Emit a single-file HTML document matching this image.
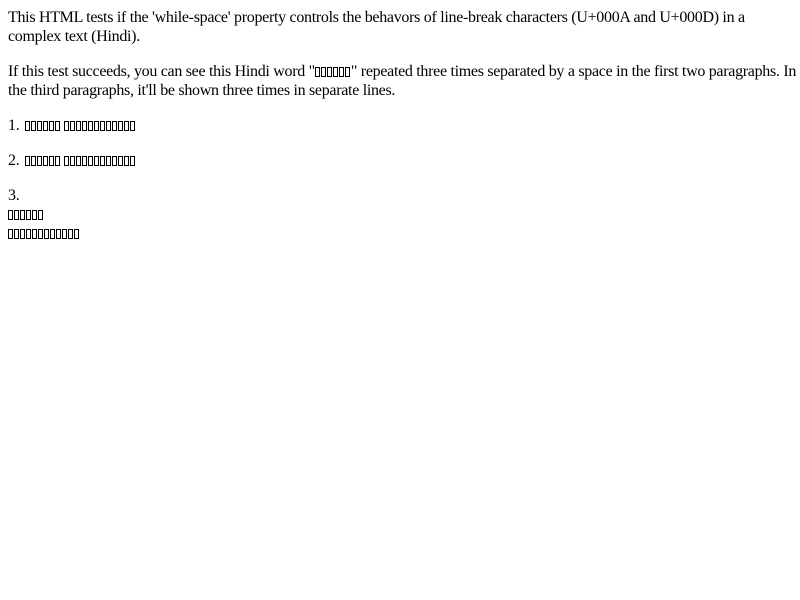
<!DOCTYPE html>
<html><head><meta charset="utf-8">
<style>
body{margin:8px;font-family:"Liberation Serif",serif;font-size:16px;color:#000;background:#fff;line-height:19px;letter-spacing:-0.3px}
p{margin:16px 0}
p:first-child{margin-top:0}
.b{display:inline-block;width:3px;height:8px;border:1px solid #000;margin-right:1px;vertical-align:-1px}
.w{display:inline-block;white-space:nowrap;letter-spacing:0}
.w2{margin-left:3px}
.n{margin-left:2px}
</style></head><body>
<p>This HTML tests if the 'while-space' property controls the behavors of line-break characters (U+000A and U+000D) in a complex text (Hindi).</p>
<p style="white-space:nowrap">If this test succeeds, you can see this Hindi word "<span class="w"><i class="b"></i><i class="b"></i><i class="b"></i><i class="b"></i><i class="b"></i><i class="b"></i></span>" repeated three times separated by a space in the first two paragraphs. In<br>the third paragraphs, it'll be shown three times in separate lines.</p>
<p>1. <span class="w n"><i class="b"></i><i class="b"></i><i class="b"></i><i class="b"></i><i class="b"></i><i class="b"></i></span><span class="w w2"><i class="b"></i><i class="b"></i><i class="b"></i><i class="b"></i><i class="b"></i><i class="b"></i><i class="b"></i><i class="b"></i><i class="b"></i><i class="b"></i><i class="b"></i><i class="b"></i></span></p>
<p>2. <span class="w n"><i class="b"></i><i class="b"></i><i class="b"></i><i class="b"></i><i class="b"></i><i class="b"></i></span><span class="w w2"><i class="b"></i><i class="b"></i><i class="b"></i><i class="b"></i><i class="b"></i><i class="b"></i><i class="b"></i><i class="b"></i><i class="b"></i><i class="b"></i><i class="b"></i><i class="b"></i></span></p>
<p>3.<br><span class="w"><i class="b"></i><i class="b"></i><i class="b"></i><i class="b"></i><i class="b"></i><i class="b"></i></span><br><span class="w"><i class="b"></i><i class="b"></i><i class="b"></i><i class="b"></i><i class="b"></i><i class="b"></i><i class="b"></i><i class="b"></i><i class="b"></i><i class="b"></i><i class="b"></i><i class="b"></i></span></p>
</body></html>
